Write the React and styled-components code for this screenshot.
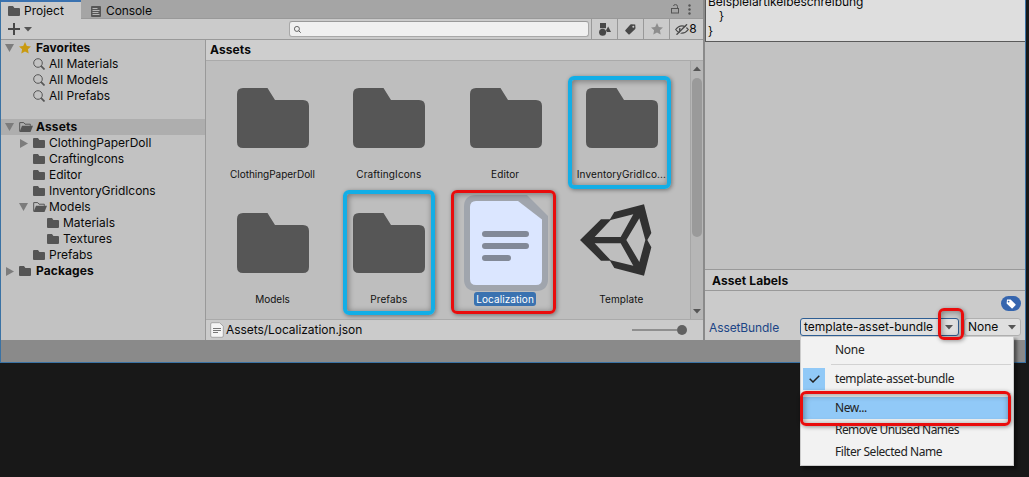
import React from 'react';
import styled, { createGlobalStyle } from 'styled-components';

const Global = createGlobalStyle`
  * { box-sizing: border-box; }
  body { margin: 0; background: #181818; overflow: hidden; }
  svg { display: block; flex: none; }
`;

const Desktop = styled.div`
  position: relative;
  width: 1029px;
  height: 477px;
  overflow: hidden;
  background: #181818;
  font-family: Inter, "Liberation Sans", sans-serif;
  font-size: 12px;
  color: #090909;
  white-space: nowrap;
`;
const EditorWindow = styled.div`
  display: flex;
  flex-direction: column;
  width: 1026px;
  height: 363px;
  border: 1px solid #3a72a4;
  border-top: 0;
  background: #8a8a8a;
`;
const Docks = styled.div`
  display: flex;
  height: 340px;
  gap: 2px;
`;
const ProjectDock = styled.div`
  display: flex;
  flex-direction: column;
  width: 702px;
  background: #c2c2c2;
`;
const TabBar = styled.div`
  display: flex;
  height: 19px;
  background: #a5a5a5;
  border-bottom: 1px solid #999;
`;
const Tab = styled.div`
  display: flex;
  align-items: center;
  gap: ${p => p.$gap || 4}px;
  height: 19px;
  width: ${p => p.$w}px;
  padding: 3px 0 0 ${p => p.$pad}px;
  background: ${p => (p.$active ? '#cbcbcb' : 'transparent')};
  box-shadow: ${p => (p.$active ? 'inset 0 2px #3a72b0' : 'none')};
`;
const TabTools = styled.div`
  display: flex;
  align-items: center;
  gap: 9px;
  margin-left: auto;
  padding-right: 12px;
`;
const Text = styled.span`
  font-size: ${p => p.$size || 12}px;
  font-weight: ${p => (p.$bold ? 700 : 400)};
  letter-spacing: ${p => p.$ls || 0}px;
  line-height: 16px;
`;
const Toolbar = styled.div`
  display: flex;
  align-items: center;
  height: 21px;
  background: #cbcbcb;
  border-bottom: 1px solid #999;
`;
const AddButton = styled.div`
  display: flex;
  align-items: center;
  gap: 4px;
  width: 288px;
  padding-left: 7px;
`;
const SearchField = styled.div`
  display: flex;
  align-items: center;
  width: 300px;
  height: 16px;
  padding-left: 4px;
  margin-right: 2px;
  background: #f0f0f0;
  border: 1px solid #a8a8a8;
  border-top-color: #999;
  border-radius: 3px;
`;
const ToolButton = styled.div`
  display: flex;
  align-items: center;
  justify-content: center;
  width: ${p => p.$w || 26}px;
  height: 20px;
  border-left: 1px solid #999;
`;
const Columns = styled.div`
  display: flex;
  height: 300px;
`;
const Tree = styled.div`
  width: 205px;
  height: 300px;
  border-right: 1px solid #999;
  background: #c2c2c2;
`;
const TreeRow = styled.div`
  display: flex;
  align-items: center;
  height: 16px;
  margin-top: ${p => p.$gap || 0}px;
  padding-left: ${p => 4 + p.$depth * 14}px;
  background: ${p => (p.$selected ? '#aeaeae' : 'transparent')};
`;
const Foldout = styled.span`
  display: flex;
  justify-content: center;
  width: 9px;
  margin-right: 5px;
`;
const RowIcon = styled.span`
  display: flex;
  width: ${p => p.$w || 16}px;
`;
const Browser = styled.div`
  display: flex;
  flex-direction: column;
  width: 497px;
`;
const Breadcrumb = styled.div`
  height: 21px;
  padding: 2px 0 0 4px;
  background: #cecece;
  border-bottom: 1px solid #aaa;
`;
const BrowserBody = styled.div`
  display: flex;
  height: 258px;
  background: #bebebe;
`;
const AssetGrid = styled.div`
  display: grid;
  grid-template-columns: repeat(4, 96px);
  grid-auto-rows: 111px;
  gap: 14px 20.300px;
  width: 484px;
  padding: 9px 0 0 19px;
`;
const Asset = styled.div`
  display: flex;
  flex-direction: column;
  align-items: center;
`;
const Thumb = styled.div`
  display: flex;
  align-items: center;
  justify-content: center;
  width: 96px;
  height: 96px;
`;
const AssetName = styled.div`
  height: 14px;
  margin: 1px 1px 0 0;
  padding: 0 2.5px;
  border-radius: 3px;
  font-size: 10px;
  line-height: 15px;
  letter-spacing: ${p => p.$ls || 0}px;
  color: ${p => (p.$selected ? '#fff' : '#111')};
  background: ${p => (p.$selected ? '#3a72b0' : 'transparent')};
`;
const Scrollbar = styled.div`
  display: flex;
  flex-direction: column;
  align-items: center;
  width: 13px;
  padding: 4px 0 4px;
  border-left: 1px solid #a6a6a6;
  background: #b6b6b6;
`;
const ScrollThumb = styled.div`
  width: 10px;
  height: 159px;
  margin: 5px 0 auto;
  border-radius: 5px;
  background: #9a9a9a;
`;
const StatusBar = styled.div`
  display: flex;
  align-items: center;
  gap: 2px;
  height: 21px;
  padding: 0 16px 0 4px;
  background: #cbcbcb;
  border-top: 1px solid #aaa;
`;
const Slider = styled.div`
  display: flex;
  align-items: center;
  width: 55px;
  margin-left: auto;
  &::before { content: ''; flex: 1; height: 2px; background: #8f8f8f; }
  &::after { content: ''; width: 10px; height: 10px; border-radius: 50%; background: #616161; }
`;
const Inspector = styled.div`
  display: flex;
  flex-direction: column;
  width: 320px;
  background: #c2c2c2;
`;
const Preview = styled.pre`
  height: 42px;
  margin: 0;
  padding-left: 2px;
  overflow: hidden;
  background: #dedede;
  border: 1px solid #5a5a5a;
  border-width: 0 0 1px 1px;
  font-family: inherit;
  font-size: 12px;
  line-height: 15px;
`;
const PreviewLine = styled.div`
  height: 15px;
  padding-left: ${p => p.$indent || 0}px;
  letter-spacing: ${p => p.$ls || 0}px;
  &:first-child { height: 14px; margin-top: -6px; }
`;
const SectionTitle = styled.div`
  height: 22px;
  margin-top: auto;
  padding: 3px 0 0 7px;
  border: 1px solid #999;
  border-width: 1px 0;
  background: #cbcbcb;
`;
const Labels = styled.div`
  display: flex;
  flex-direction: column;
  height: 49px;
  padding: 5px 4px 0;
  background: #cbcbcb;
`;
const LabelPill = styled.div`
  display: flex;
  align-items: center;
  justify-content: center;
  align-self: flex-end;
  width: 20px;
  height: 15px;
  border-radius: 8px;
  background: #3565ae;
`;
const BundleRow = styled.div`
  display: flex;
  align-items: center;
  margin-top: 7px;
`;
const BundleLabel = styled.div`
  width: 91px;
  padding-top: 1px;
  color: #1c4586;
`;
const Dropdown = styled.div`
  display: flex;
  align-items: center;
  justify-content: space-between;
  width: ${p => p.$w}px;
  height: 18px;
  margin-left: ${p => p.$ml || 0}px;
  padding: 0 ${p => p.$pr}px 0 3px;
  background: #dfdfdf;
  border: 1px solid ${p => (p.$focus ? '#2f5f94' : '#b0b0b0')};
  border-radius: 3px;
`;
const Menu = styled.div`
  position: absolute;
  left: 800px;
  top: 336px;
  width: 214px;
  height: 130px;
  padding: 2px;
  background: #f2f2f2;
  border: 1px solid #ccc;
  box-shadow: 3px 3px 3px rgba(0, 0, 0, .45);
  color: #222;
  font-family: "Noto Sans", sans-serif;
`;
const MenuItem = styled.div`
  display: flex;
  align-items: center;
  height: 22px;
  background: ${p => (p.$hover ? '#91c9f7' : 'transparent')};
`;
const MenuCheck = styled.span`
  display: flex;
  align-items: center;
  justify-content: center;
  width: 22px;
  height: 22px;
  margin-right: 10px;
  background: ${p => (p.$on ? '#91c9f7' : 'transparent')};
`;
const Separator = styled.div`
  height: 1px;
  margin: 3px 0 3px 28px;
  background: #d2d2d2;
`;
const Callout = styled.div`
  position: absolute;
  left: ${p => p.$x}px;
  top: ${p => p.$y}px;
  width: ${p => p.$w}px;
  height: ${p => p.$h}px;
  border: ${p => p.$t || 3}px solid ${p => p.$color};
  border-radius: 6px;
  box-shadow: 1px 1px 4px rgba(0, 0, 0, .4), inset 1px 1px 6px rgba(0, 0, 0, .4);
`;

const Arrow = ({ dir = 'down', size = 8, color = '#555' }) => (
  <svg width={size} height={size} viewBox="0 0 8 8">
    <path fill={color} d={dir === 'down' ? 'M0 2h8L4 6.5z' : 'M0 6h8L4 1.5z'} />
  </svg>
);
const FoldArrow = ({ open }) => open
  ? <svg width="9" height="8" viewBox="0 0 9 8"><path fill="#7c7c7c" d="M0 0h9L4.500 8z" /></svg>
  : <svg width="8" height="9" viewBox="0 0 8 9"><path fill="#7c7c7c" d="M0 0v9l8-4.500z" /></svg>;
const FolderSmall = () => (
  <svg width="12" height="10" viewBox="0 0 12 10">
    <path fill="#555" d="M0 1q0-1 1-1h4l1.400 2H11q1 0 1 1v6q0 1-1 1H1q-1 0-1-1z" />
  </svg>
);
const FolderOpen = () => (
  <svg width="14" height="10" viewBox="0 0 14 10">
    <path fill="none" stroke="#555" d="M.7 9.300V.6h4l1.300 1.600h5.300v1.600" />
    <path fill="#555" d="M3 3.800h11L11.500 10H.5z" />
  </svg>
);
const FolderBig = () => (
  <svg width="72" height="60" viewBox="0 0 72 60">
    <path fill="#565656" d="M6 0h24.500L38 12h28q6 0 6 6v36q0 6-6 6H6q-6 0-6-6V6q0-6 6-6z" />
  </svg>
);
const Lens = ({ size = 12 }) => (
  <svg width={size} height={size} viewBox="0 0 12 12" fill="none" stroke="#555">
    <circle cx="5" cy="5" r="4.300" strokeWidth={size < 10 ? 1.500 : 1} />
    <path d="M8.200 8.200l3.300 3.300" strokeWidth="1.700" />
  </svg>
);
const Star = ({ size, color }) => (
  <svg width={size} height={size} viewBox="0 0 12 12">
    <path fill={color} d="M6 0l1.800 3.900 4.200.5-3.100 2.900.8 4.300L6 9.500l-3.700 2.100.8-4.300L0 4.400l4.200-.5z" />
  </svg>
);
const ConsoleIcon = () => (
  <svg width="10" height="11" viewBox="0 0 10 11">
    <rect width="10" height="11" rx="1" fill="#565656" />
    <path stroke="#b5b5b5" d="M1.500 2.500h5M1.500 4.500h7M1.500 6.500h6M1.500 8.500h7" />
  </svg>
);
const LockIcon = () => (
  <svg width="8" height="10" viewBox="0 0 8 10" fill="none" stroke="#555">
    <rect x=".5" y="4.500" width="7" height="4.500" />
    <path d="M6.500 4.500V2.500Q6.500.6 4.500.6T2.500 2" />
  </svg>
);
const DotsIcon = () => (
  <svg width="3" height="11" viewBox="0 0 3 11" fill="#555">
    <circle cx="1.500" cy="1.500" r="1.200" /><circle cx="1.500" cy="5.500" r="1.200" /><circle cx="1.500" cy="9.500" r="1.200" />
  </svg>
);
const PlusIcon = () => (
  <svg width="12" height="12" viewBox="0 0 12 12"><path stroke="#484848" strokeWidth="2" d="M6 0v12M0 6h12" /></svg>
);
const ShapesIcon = () => (
  <svg width="12" height="13" viewBox="0 0 12 13" fill="#484848">
    <rect x="1" width="6" height="5.200" /><circle cx="3.600" cy="9.300" r="3.500" /><path d="M9.200 3.500l2.800 5.500H7.800L7 7.200z" />
  </svg>
);
const TagIcon = () => (
  <svg width="11" height="11" viewBox="0 0 11 11">
    <path fill="#484848" fillRule="evenodd" d="M10.200.6L6.400.2Q5.800.2 5.400.6L.5 6q-.6.700 0 1.300l2.900 3q.7.600 1.300 0L10 5.200q.5-.5.500-1.100zM8.300 1.700a1 1 0 1 1 0 2 1 1 0 0 1 0-2z" />
  </svg>
);
const LabelTagIcon = () => (
  <svg width="10" height="10" viewBox="0 0 10 10">
    <path fill="#fff" fillRule="evenodd" d="M1 .5L4.600.4 9.500 5.300q.4.500 0 1L6.600 9.300q-.5.500-1 0L.6 4.500zM2.600 1.700a.9.900 0 1 0 0 1.800.9.900 0 0 0 0-1.800z" />
  </svg>
);
const HiddenIcon = () => (
  <svg width="14" height="11" viewBox="0 0 14 11" fill="none" stroke="#484848" strokeWidth="1.200">
    <path d="M.7 5.500Q3.500 1.800 7 1.800t6.300 3.700Q10.500 9.200 7 9.200T.7 5.500z" />
    <path d="M5 4q-1 2 .3 3" strokeWidth="1.500" />
    <path d="M13 1L3 11" stroke="#cbcbcb" />
    <path d="M12 .3L1.500 10.700" strokeWidth="1.400" />
  </svg>
);
const DocSmall = () => (
  <svg width="14" height="16" viewBox="0 0 14 16">
    <path fill="#f5f5f5" stroke="#a5a5a5" d="M2 .7h7.500l3.800 3.500V14q0 1.300-1.300 1.300H2Q.7 15.300.7 14V2Q.7.7 2 .7z" />
    <path stroke="#777" d="M3 6.500h8M3 8.500h8M3 10.500h5" />
  </svg>
);
const DocBig = () => (
  <svg width="84" height="96" viewBox="0 0 84 96">
    <path fill="#a0a5ad" d="M12 0h51l21 21v63q0 12-12 12H12Q0 96 0 84V12Q0 0 12 0z" />
    <path fill="#dbe6ff" d="M12 6h42l24 18.500V84q0 6-6 6H12q-6 0-6-6V12q0-6 6-6z" />
    <path stroke="#828997" strokeWidth="6" strokeLinecap="round" d="M21 39h41M21 51h41M21 63h23" />
  </svg>
);
const UnityCube = () => (
  <svg width="96" height="96" viewBox="2 14 288 288">
    <path fill="#313131" fillRule="evenodd" d="M30 149L93 87h27l13-22 89-23 22 86-12 21 12 22-22 85-89-23-13-22H93zM74 140h78l38-68-68 17zM74 159l48 51 68 16-38-67zM208 84l-39 65 39 66 18-66z" transform="translate(-10 0)" />
  </svg>
);
const CheckIcon = () => (
  <svg width="11" height="8" viewBox="0 0 11 8"><path fill="none" stroke="#222" strokeWidth="1.500" d="M.7 3.800L4 7 10.300.7" /></svg>
);

const tree = [
  { name: 'Favorites', depth: 0, bold: true, open: true, icon: 'star' },
  { name: 'All Materials', depth: 1, icon: 'lens' },
  { name: 'All Models', depth: 1, icon: 'lens' },
  { name: 'All Prefabs', depth: 1, icon: 'lens' },
  { name: 'Assets', depth: 0, bold: true, open: true, icon: 'open', selected: true, gap: 15, ls: 0.15 },
  { name: 'ClothingPaperDoll', depth: 1, open: false },
  { name: 'CraftingIcons', depth: 1, ls: -0.07 },
  { name: 'Editor', depth: 1 },
  { name: 'InventoryGridIcons', depth: 1, ls: -0.07 },
  { name: 'Models', depth: 1, open: true, icon: 'open' },
  { name: 'Materials', depth: 2 },
  { name: 'Textures', depth: 2 },
  { name: 'Prefabs', depth: 1 },
  { name: 'Packages', depth: 0, bold: true, open: false, ls: 0.1 },
];
const icons = {
  star: <Star size={12} color="#c99a10" />,
  lens: <Lens />,
  open: <FolderOpen />,
};
const assets = [
  { name: 'ClothingPaperDoll', ls: -0.03 },
  { name: 'CraftingIcons', ls: 0.13 },
  { name: 'Editor', ls: 0.1 },
  { name: 'InventoryGridIco...', ls: 0.1 },
  { name: 'Models' },
  { name: 'Prefabs', ls: 0.1 },
  { name: 'Localization', ls: 0.08, selected: true, thumb: <DocBig /> },
  { name: 'Template', ls: 0.1, thumb: <UnityCube /> },
];

export default function App() {
  return (
    <Desktop>
      <Global />
      <EditorWindow>
        <Docks>
          <ProjectDock>
            <TabBar>
              <Tab $active $w={80} $pad={7}><FolderSmall /><Text>Project</Text></Tab>
              <Tab $w={90} $pad={10} $gap={5}><ConsoleIcon /><Text $ls={-0.1}>Console</Text></Tab>
              <TabTools><LockIcon /><DotsIcon /></TabTools>
            </TabBar>
            <Toolbar>
              <AddButton><PlusIcon /><Arrow /></AddButton>
              <SearchField><Lens size={7} /></SearchField>
              <ToolButton><ShapesIcon /></ToolButton>
              <ToolButton><TagIcon /></ToolButton>
              <ToolButton><Star size={12} color="#8e8e8e" /></ToolButton>
              <ToolButton $w={33}><HiddenIcon /><Text>8</Text></ToolButton>
            </Toolbar>
            <Columns>
              <Tree>
                {tree.map(r => (
                  <TreeRow key={r.name} $depth={r.depth} $gap={r.gap} $selected={r.selected}>
                    <Foldout>{r.open !== undefined && <FoldArrow open={r.open} />}</Foldout>
                    <RowIcon $w={r.depth ? 16 : 17}>{icons[r.icon] || <FolderSmall />}</RowIcon>
                    <Text $bold={r.bold} $ls={r.ls}>{r.name}</Text>
                  </TreeRow>
                ))}
              </Tree>
              <Browser>
                <Breadcrumb><Text $bold $ls={0.1}>Assets</Text></Breadcrumb>
                <BrowserBody>
                  <AssetGrid>
                    {assets.map(a => (
                      <Asset key={a.name}>
                        <Thumb>{a.thumb || <FolderBig />}</Thumb>
                        <AssetName $selected={a.selected} $ls={a.ls}>{a.name}</AssetName>
                      </Asset>
                    ))}
                  </AssetGrid>
                  <Scrollbar><Arrow dir="up" /><ScrollThumb /><Arrow /></Scrollbar>
                </BrowserBody>
                <StatusBar><DocSmall /><Text $ls={-0.05}>Assets/Localization.json</Text><Slider /></StatusBar>
              </Browser>
            </Columns>
          </ProjectDock>
          <Inspector>
            <Preview>
              <PreviewLine $ls={-0.04}>Beispielartikelbeschreibung</PreviewLine>
              <PreviewLine $indent={11}>{'}'}</PreviewLine>
              <PreviewLine>{'}'}</PreviewLine>
            </Preview>
            <SectionTitle><Text $bold $ls={0.1}>Asset Labels</Text></SectionTitle>
            <Labels>
              <LabelPill><LabelTagIcon /></LabelPill>
              <BundleRow>
                <BundleLabel><Text $ls={-0.1}>AssetBundle</Text></BundleLabel>
                <Dropdown $w={159} $pr={5} $focus><Text>template-asset-bundle</Text><Arrow /></Dropdown>
                <Dropdown $w={57} $ml={5} $pr={4}><Text>None</Text><Arrow /></Dropdown>
              </BundleRow>
            </Labels>
          </Inspector>
        </Docks>
      </EditorWindow>
      <Menu>
        <MenuItem><MenuCheck /><Text $ls={-0.3}>None</Text></MenuItem>
        <Separator />
        <MenuItem><MenuCheck $on><CheckIcon /></MenuCheck><Text $ls={-0.38}>template-asset-bundle</Text></MenuItem>
        <Separator />
        <MenuItem $hover><MenuCheck /><Text $ls={-0.4}>New...</Text></MenuItem>
        <MenuItem><MenuCheck /><Text $ls={-0.57}>Remove Unused Names</Text></MenuItem>
        <MenuItem><MenuCheck /><Text $ls={-0.45}>Filter Selected Name</Text></MenuItem>
      </Menu>
      <Callout $x={567.5} $y={75.5} $w={103} $h={113} $t={4} $color="#13aee6" />
      <Callout $x={343} $y={189.5} $w={91.5} $h={125} $t={4} $color="#13aee6" />
      <Callout $x={451} $y={190} $w={105} $h={124} $color="#e90c0c" />
      <Callout $x={938} $y={308} $w={26} $h={32} $color="#e90c0c" />
      <Callout $x={800} $y={391} $w={211} $h={35} $color="#e90c0c" />
    </Desktop>
  );
}
